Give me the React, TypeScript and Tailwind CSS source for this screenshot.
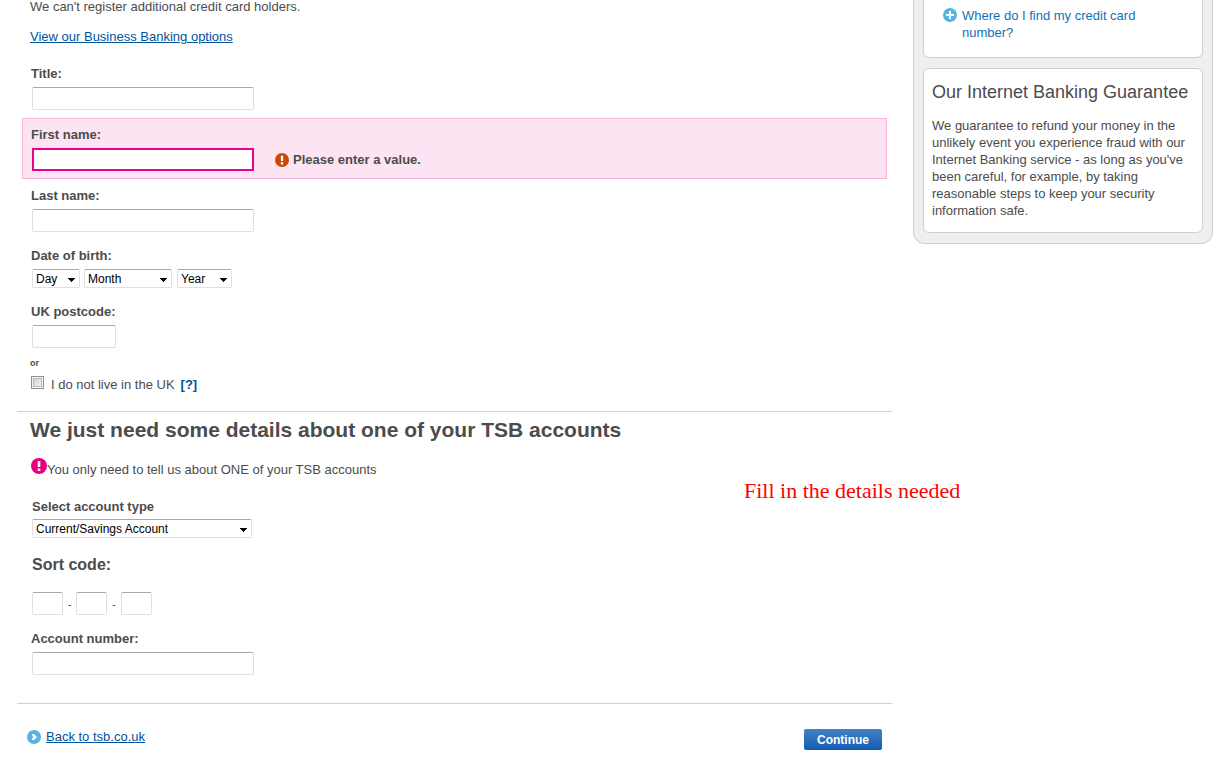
import React from "react";

const inputBase =
  "block h-[23px] rounded-[2px] border border-[#dfdfe8] border-t-[#a9a9ad] bg-white px-1 text-[13px] text-black outline-none";

type FieldProps = {
  id: string;
  label: string;
  width?: string;
};

const Field = ({ id, label, width = "w-[222px]" }: FieldProps) => (
  <div className="mx-[5px] px-[9px] pb-2 pt-2.5">
    <label htmlFor={id} className="block font-bold">
      {label}
    </label>
    <input id={id} type="text" className={`ml-px mt-1.5 ${width} ${inputBase}`} />
  </div>
);

type DropdownProps = {
  id: string;
  label?: string;
  value: string;
  width: string;
};

const Dropdown = ({ id, label, value, width }: DropdownProps) => (
  <span className={`relative block ${width}`}>
    <select
      id={id}
      aria-label={label}
      className="block h-[19px] w-full appearance-none rounded-[2px] border border-[#dfdfe8] border-t-[#a9a9ad] bg-white pl-[3px] text-[12px] leading-4 text-black outline-none"
    >
      <option>{value}</option>
    </select>
    <svg
      className="pointer-events-none absolute right-[5px] top-[9px]"
      width="7"
      height="4"
      viewBox="0 0 7 4"
      aria-hidden="true"
      shapeRendering="crispEdges"
    >
      <path d="M0 0h7v1H0zM1 1h5v1H1zM2 2h3v1H2zM3 3h1v1H3z" fill="#000" />
    </svg>
  </span>
);

const AlertIcon = ({ size, color }: { size: number; color: string }) => (
  <svg width={size} height={size} viewBox="0 0 16 16" className="shrink-0" aria-hidden="true">
    <circle cx="8" cy="8" r="8" fill={color} />
    <path d="M6.7 3h2.6v6H6.7zM6.7 10.6h2.6v2.4H6.7z" fill="#fff" />
  </svg>
);

const App = () => {
  return (
    <div className="flex items-start gap-[21px] pl-[17px] pr-[9px] font-['Liberation_Sans',Arial,sans-serif] text-[13px] leading-[14px] text-[#4c4c4c]">
      <form className="relative min-w-0 flex-1" onSubmit={(e) => e.preventDefault()}>
        <div className="px-[13px] pb-[13px]">
          <p>We can't register additional credit card holders.</p>
          <p className="mt-4">
            <a href="#business" className="text-[#00539f] underline">
              View our Business Banking options
            </a>
          </p>
        </div>

        <Field id="title" label="Title:" />

        <div className="mx-[5px] border border-[#f9b4dc] bg-[#fce4f2] px-2 pb-[7px] pt-[9px]">
          <label htmlFor="first-name" className="block font-bold">
            First name:
          </label>
          <div className="mt-1.5 flex items-center">
            <input
              id="first-name"
              type="text"
              aria-invalid="true"
              aria-describedby="first-name-error"
              className="ml-px h-[23px] w-[222px] border-2 border-[#ec008c] bg-white px-1 text-[13px] text-black outline-none"
            />
            <p id="first-name-error" className="ml-[21px] flex items-center gap-1 font-bold">
              <AlertIcon size={14} color="#d14600" />
              Please enter a value.
            </p>
          </div>
        </div>

        <Field id="last-name" label="Last name:" />

        <fieldset className="px-[14px] pt-[9px]">
          <legend className="float-left w-full font-bold">Date of birth:</legend>
          <div className="clear-both ml-px flex pt-1.5">
            <Dropdown id="dob-day" label="Day" value="Day" width="mr-1 w-12" />
            <Dropdown id="dob-month" label="Month" value="Month" width="mr-[5px] w-[88px]" />
            <Dropdown id="dob-year" label="Year" value="Year" width="w-[55px]" />
          </div>
        </fieldset>

        <div className="pt-[7px]">
          <Field id="postcode" label="UK postcode:" width="w-[84px]" />
        </div>

        <div className="px-[13px]">
          <p className="text-[9px] font-bold">or</p>
          <div className="ml-px mt-1.5 flex">
            <input
              id="non-uk"
              type="checkbox"
              className="h-[13px] w-[13px] appearance-none border border-[#8e8f8f] bg-linear-to-br from-[#cbcfd5] to-[#f6f6f6] shadow-[inset_0_0_0_1px_#f4f4f4,inset_0_0_0_2px_#b8bcc2]"
            />
            <label htmlFor="non-uk" className="ml-[7px] mt-0.5">
              I do not live in the UK
            </label>
            <a href="#non-uk-help" className="ml-1.5 mt-0.5 font-bold text-[#00539f]">
              [?]
            </a>
          </div>
        </div>

        <section className="mt-[19px] border-t border-[#cfd0d0] pt-1.5">
          <h2 className="px-[13px] text-[21px] leading-6 font-bold">
            We just need some details about one of your TSB accounts
          </h2>
          <p className="ml-[14px] mt-4 flex items-start">
            <AlertIcon size={16} color="#e6007e" />
            <span className="mt-[5px]">You only need to tell us about ONE of your TSB accounts</span>
          </p>

          <div className="ml-[15px] mt-[23px]">
            <label htmlFor="account-type" className="block font-bold">
              Select account type
            </label>
            <div className="mt-[5px]">
              <Dropdown id="account-type" value="Current/Savings Account" width="w-[220px]" />
            </div>
          </div>

          <fieldset className="ml-[15px] mt-[17px]">
            <legend className="text-base leading-5 font-bold">Sort code:</legend>
            <div className="mt-[17px] flex items-center leading-3">
              <input aria-label="Sort code, first two digits" maxLength={2} className={`w-[31px] ${inputBase}`} />
              <span className="w-[13px] text-center text-[11px]">-</span>
              <input aria-label="Sort code, middle two digits" maxLength={2} className={`w-[31px] ${inputBase}`} />
              <span className="w-[14px] text-center text-[11px]">-</span>
              <input aria-label="Sort code, last two digits" maxLength={2} className={`w-[31px] ${inputBase}`} />
            </div>
          </fieldset>

          <div className="pb-5 pt-[7px]">
            <Field id="account-number" label="Account number:" />
          </div>
        </section>

        <div className="flex items-start justify-between border-t border-[#cfd0d0] px-2.5 pb-[26px] pt-[25px]">
          <a href="#tsb" className="flex items-center gap-[5px] leading-4 text-[#00539f]">
            <svg width="14" height="14" viewBox="0 0 14 14" aria-hidden="true">
              <circle cx="7" cy="7" r="7" fill="#56b4e4" />
              <path d="M5 4h2l3 3-3 3H5V8.8L6.4 7 5 5.2z" fill="#fff" />
            </svg>
            <span className="underline">Back to tsb.co.uk</span>
          </a>
          <button
            type="submit"
            className="h-[21px] w-[78px] rounded-[2px] bg-linear-to-b from-[#4383c4] to-[#0f5bb5] text-[12px] font-bold text-white"
          >
            Continue
          </button>
        </div>

        <p className="absolute left-[727px] top-[479px] whitespace-nowrap font-['Liberation_Serif','Times_New_Roman',serif] text-[22px] leading-6 text-[#ff0000]">
          Fill in the details needed
        </p>
      </form>

      <aside className="w-[300px] shrink-0 rounded-b-xl border border-t-0 border-[#cfcfcf] bg-[#efefef] px-[9px] pb-2.5">
        <div className="rounded-b-md border border-t-0 border-[#cfcfcf] bg-white pb-4 pl-[19px] pr-2 pt-[7px]">
          <a href="#card-number" className="flex gap-[5px] leading-[17px] text-[#1072b9]">
            <svg width="14" height="14" viewBox="0 0 14 14" className="mt-px shrink-0" aria-hidden="true">
              <circle cx="7" cy="7" r="7" fill="#56b4e4" />
              <path d="M6 3h2v3h3v2H8v3H6V8H3V6h3z" fill="#fff" />
            </svg>
            <span className="w-[190px]">Where do I find my credit card number?</span>
          </a>
        </div>
        <div className="mt-2.5 rounded-md border border-[#cfcfcf] bg-white px-2 pb-[13px] pt-[11px]">
          <h2 className="whitespace-nowrap text-lg leading-6">Our Internet Banking Guarantee</h2>
          <p className="mt-[13px] leading-[17px]">
            We guarantee to refund your money in the unlikely event you experience fraud with our
            Internet Banking service - as long as you've been careful, for example, by taking
            reasonable steps to keep your security information safe.
          </p>
        </div>
      </aside>
    </div>
  );
};

export default App;
